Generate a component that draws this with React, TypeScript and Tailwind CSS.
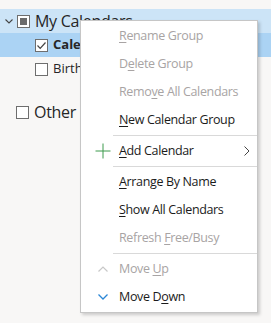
import type { ReactNode } from "react";

const font = { fontFamily: '"Open Sans", "Noto Sans", sans-serif' };

type Item = {
  label: ReactNode;
  disabled?: boolean;
  icon?: ReactNode;
  submenu?: boolean;
};

const U = ({ children }: { children: ReactNode }) => (
  <span className="underline underline-offset-2">{children}</span>
);

const PlusIcon = () => (
  <svg width="16" height="16" viewBox="0 0 16 16">
    <path d="M8 0.5V15.5M0.5 8H15.5" stroke="#3c9a4c" strokeWidth="1" />
  </svg>
);

const ChevronUp = () => (
  <svg width="10" height="6" viewBox="0 0 10 6">
    <path d="M0.5 5.5L5 1L9.5 5.5" stroke="#c8c8c8" strokeWidth="1.2" fill="none" />
  </svg>
);

const ChevronDown = () => (
  <svg width="10" height="6" viewBox="0 0 10 6">
    <path d="M0.5 0.5L5 5L9.5 0.5" stroke="#2b87d6" strokeWidth="1.3" fill="none" />
  </svg>
);

const groups: Item[][] = [
  [
    { label: <><U>R</U>ename Group</>, disabled: true },
    { label: <>D<U>e</U>lete Group</>, disabled: true },
    { label: <>Remo<U>v</U>e All Calendars</>, disabled: true },
    { label: <><U>N</U>ew Calendar Group</> }
  ],
  [{ label: <><U>A</U>dd Calendar</>, icon: <PlusIcon />, submenu: true }],
  [
    { label: <><U>A</U>rrange By Name</> },
    { label: <><U>S</U>how All Calendars</> },
    { label: <>Refresh <U>F</U>ree/Busy</>, disabled: true }
  ],
  [
    { label: <>Move <U>U</U>p</>, disabled: true, icon: <ChevronUp /> },
    { label: <>Move D<U>o</U>wn</>, icon: <ChevronDown /> }
  ]
];

function Checkbox({ checked, partial }: { checked?: boolean; partial?: boolean }) {
  return (
    <span className="flex h-[13px] w-[13px] shrink-0 items-center justify-center border border-[#6e6e6e] bg-white">
      {partial && <span className="h-[7px] w-[7px] bg-[#6b6b6b]" />}
      {checked && (
        <svg width="11" height="11" viewBox="0 0 11 11">
          <path d="M1.5 5.5L4.2 8.3L9.5 2.5" stroke="#444" strokeWidth="1.2" fill="none" />
        </svg>
      )}
    </span>
  );
}

function ContextMenu() {
  return (
    <div
      className="absolute left-[80px] top-[20px] w-[178px] border border-[#c6c6c6] bg-white py-px shadow-[2px_2px_3px_rgba(0,0,0,0.18)]"
      style={font}
    >
      {groups.map((group, gi) => (
        <div key={gi}>
          {gi > 0 && (
            <div className="flex h-[3px] items-start pl-[32px]">
              <div className="mt-px h-px w-full bg-[#d9d9d9]" />
            </div>
          )}
          {group.map((item, ii) => (
            <div
              key={ii}
              className={`flex h-[28px] items-center text-[12.5px] tracking-[-0.35px] ${
                item.disabled ? "text-[#a8a4a4]" : "text-[#1b1b1b]"
              }`}
            >
              <span className="flex w-[38px] shrink-0 items-center justify-center pl-[6px]">
                {item.icon}
              </span>
              <span className="flex-1 whitespace-nowrap">{item.label}</span>
              {item.submenu && (
                <svg className="mr-[7px]" width="6" height="10" viewBox="0 0 6 10">
                  <path d="M0.5 0.5L5 5L0.5 9.5" stroke="#444" strokeWidth="1" fill="none" />
                </svg>
              )}
            </div>
          ))}
        </div>
      ))}
    </div>
  );
}

export default function App() {
  return (
    <div className="relative h-[323px] w-[271px] overflow-hidden bg-[#f8f7f6]" style={font}>
      <div className="pt-[9px]">
        <div className="flex h-[24px] items-center bg-[#cce4f7]">
          <svg className="ml-[5px] mr-[4px]" width="8" height="5" viewBox="0 0 8 5">
            <path d="M0.5 0.5L4 4L7.5 0.5" stroke="#444" strokeWidth="1.1" fill="none" />
          </svg>
          <Checkbox partial />
          <span className="ml-[5px] whitespace-nowrap text-[16px] tracking-[-0.3px] text-[#262626]">My Calendars</span>
        </div>
        <div className="flex h-[24px] items-center bg-[#abd3f4] pl-[35px]">
          <Checkbox checked />
          <span className="ml-[5px] whitespace-nowrap text-[13px] font-bold text-[#262626]">Calendar</span>
        </div>
        <div className="flex h-[24px] items-center pl-[35px]">
          <Checkbox />
          <span className="ml-[5px] whitespace-nowrap text-[13px] text-[#262626]">Birthdays</span>
        </div>
        <div className="mt-[19px] flex h-[24px] items-center pl-[16px]">
          <Checkbox />
          <span className="ml-[5px] whitespace-nowrap text-[16px] tracking-[-0.3px] text-[#262626]">Other Calendars</span>
        </div>
      </div>
      <ContextMenu />
    </div>
  );
}
